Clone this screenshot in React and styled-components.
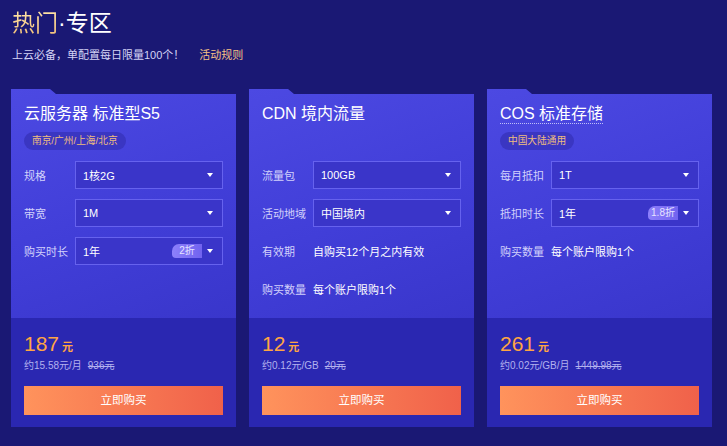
import React from 'react'
import styled, { createGlobalStyle } from 'styled-components'

const Global = createGlobalStyle`
  html, body {
    margin: 0;
    background: #1a1874;
    font-family: "Liberation Sans", "Noto Sans CJK SC", sans-serif;
  }
`;

const products = [
  {
    title: '云服务器 标准型S5',
    tag: '南京/广州/上海/北京',
    rows: [
      { label: '规格', select: '1核2G' },
      { label: '带宽', select: '1M' },
      { label: '购买时长', select: '1年', badge: '2折' },
    ],
    price: '187',
    unit: '约15.58元/月',
    origin: '936元',
  },
  {
    title: 'CDN 境内流量',
    rows: [
      { label: '流量包', select: '100GB' },
      { label: '活动地域', select: '中国境内' },
      { label: '有效期', text: '自购买12个月之内有效' },
      { label: '购买数量', text: '每个账户限购1个' },
    ],
    price: '12',
    unit: '约0.12元/GB',
    origin: '20元',
  },
  {
    title: 'COS 标准存储',
    dotted: true,
    tag: '中国大陆通用',
    rows: [
      { label: '每月抵扣', select: '1T' },
      { label: '抵扣时长', select: '1年', badge: '1.8折' },
      { label: '购买数量', text: '每个账户限购1个' },
    ],
    price: '261',
    unit: '约0.02元/GB/月',
    origin: '1449.98元',
  },
];

const App = () => {
  return (
    <Page>
      <Global />
      <Header>
        <h1><span className="hot">热门</span>·专区</h1>
        <p>上云必备，单配置每日限量100个！<a>活动规则</a></p>
      </Header>
      <Cards>
        {products.map((p, i) => (
          <Card key={i}>
            <Top>
              <Title dotted={p.dotted}><span>{p.title}</span></Title>
              <TagLine>{p.tag && <Tag>{p.tag}</Tag>}</TagLine>
              <Rows>
                {p.rows.map((r, j) => (
                  <Row key={j}>
                    <Label>{r.label}</Label>
                    {r.select ? (
                      <Select>
                        <span className="value">{r.select}</span>
                        {r.badge && <Badge>{r.badge}</Badge>}
                        <Caret />
                      </Select>
                    ) : (
                      <Value>{r.text}</Value>
                    )}
                  </Row>
                ))}
              </Rows>
            </Top>
            <Bottom>
              <Price>{p.price}<small>元</small></Price>
              <Sub>{p.unit}<s>{p.origin}</s></Sub>
              <Buy>立即购买</Buy>
            </Bottom>
          </Card>
        ))}
      </Cards>
    </Page>
  );
}

const Page = styled.div`
  width: 727px;
  height: 446px;
  overflow: hidden;
  background: #1a1874;
`;

const Header = styled.div`
  padding: 8px 12px 0;
  h1 {
    margin: 0;
    font-size: 23px;
    line-height: 30px;
    font-weight: normal;
    color: #fff;
  }
  .hot {
    background: linear-gradient(180deg, #ffe5a8, #f2bf78);
    -webkit-background-clip: text;
    background-clip: text;
    color: transparent;
  }
  p {
    margin: 8px 0 0;
    font-size: 11px;
    line-height: 18px;
    color: #d4d3f5;
  }
  a {
    margin-left: 15px;
    color: #f7c185;
  }
`;

const Cards = styled.div`
  display: grid;
  grid-template-columns: repeat(3, 225px);
  gap: 13px;
  padding: 25px 0 0 11px;
`;

const Card = styled.div`
  height: 338px;
  display: flex;
  flex-direction: column;
  clip-path: polygon(0 0, 39px 0, 45px 5px, 100% 5px, 100% 100%, 0 100%);
`;

const Top = styled.div`
  height: 229px;
  box-sizing: border-box;
  padding: 15px 13px 0;
  background: linear-gradient(160deg, #4c49e2 0%, #413ed8 55%, #3936cb 100%);
`;

const Title = styled.div`
  font-size: 16px;
  line-height: 20px;
  color: #fff;
  span {
    display: inline-block;
    border-bottom: 1px dotted ${p => p.dotted ? 'rgba(220,220,255,0.8)' : 'transparent'};
    line-height: 19px;
  }
`;

const TagLine = styled.div`
  height: 18px;
  margin-top: 6px;
`;

const Tag = styled.span`
  display: inline-block;
  height: 18px;
  line-height: 18px;
  padding: 0 8px;
  border-radius: 9px;
  background: #3a36c2;
  color: #eebd7e;
  font-size: 9.7px;
`;

const Rows = styled.div`
  display: flex;
  flex-direction: column;
  gap: 10px;
  margin-top: 13px;
`;

const Row = styled.div`
  display: flex;
  align-items: center;
  height: 28px;
`;

const Label = styled.div`
  width: 51px;
  flex: none;
  font-size: 11px;
  color: #d2d1fb;
`;

const Select = styled.div`
  flex: 1;
  height: 28px;
  box-sizing: border-box;
  display: flex;
  align-items: center;
  padding: 0 9px 0 7px;
  border: 1px solid #6662ee;
  background: #3a35c9;
  color: #fff;
  font-size: 11px;
  .value {
    flex: 1;
  }
`;

const Badge = styled.span`
  min-width: 30px;
  box-sizing: border-box;
  text-align: center;
  height: 14px;
  line-height: 14px;
  padding: 0 3px;
  margin-right: 5px;
  border-radius: 7px 0 0 4px;
  background: linear-gradient(90deg, #8d80fb, #7163ef);
  color: #e6e4ff;
  font-size: 10px;
`;

const Caret = styled.span`
  width: 0;
  height: 0;
  border-left: 3.5px solid transparent;
  border-right: 3.5px solid transparent;
  border-top: 4px solid #fff;
`;

const Value = styled.div`
  font-size: 11px;
  color: #fff;
`;

const Bottom = styled.div`
  flex: 1;
  padding: 14px 13px 0;
  background: #2a27b1;
`;

const Price = styled.div`
  font-size: 21px;
  line-height: 24px;
  color: #ffa543;
  small {
    margin-left: 3px;
    font-size: 11px;
    font-weight: bold;
  }
`;

const Sub = styled.div`
  font-size: 10px;
  line-height: 14px;
  color: #b3b1ee;
  s {
    margin-left: 6px;
  }
`;

const Buy = styled.div`
  margin-top: 13px;
  height: 29px;
  line-height: 29px;
  text-align: center;
  background: linear-gradient(90deg, #ff935c, #f0614a);
  color: #fff;
  font-size: 11.5px;
`;

export default App
